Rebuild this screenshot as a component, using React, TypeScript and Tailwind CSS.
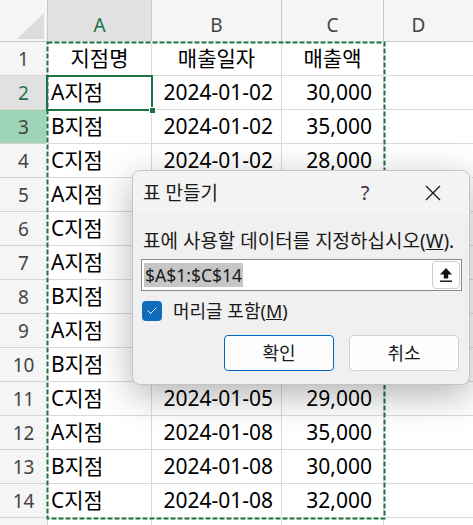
import { Check } from 'lucide-react'

// rows 5-10 of columns B and C sit under the dialog and are not visible
const rows: [string, string, string][] = [
  ['A지점', '2024-01-02', '30,000'],
  ['B지점', '2024-01-02', '35,000'],
  ['C지점', '2024-01-02', '28,000'],
  ['A지점', '', ''],
  ['C지점', '', ''],
  ['A지점', '', ''],
  ['B지점', '', ''],
  ['A지점', '', ''],
  ['B지점', '', ''],
  ['C지점', '2024-01-05', '29,000'],
  ['A지점', '2024-01-08', '35,000'],
  ['B지점', '2024-01-08', '30,000'],
  ['C지점', '2024-01-08', '32,000'],
]

const font = { fontFamily: '"Noto Sans", "Noto Sans CJK KR", sans-serif' }

function RowHeader({ n }: { n: number }) {
  // 2 = active row, 3 = highlighted row
  const bg = n === 2 ? 'bg-[#e1e1e1] text-[#1e7145]' : n === 3 ? 'bg-[#9fd5b7] text-[#444]' : 'bg-[#f5f5f5] text-[#444]'
  return (
    <div className={`flex items-center justify-center pt-[2px] border-r border-b border-[#d4d4d4] text-[19px] ${bg}`}>
      {n}
    </div>
  )
}

export default function App() {
  return (
    <div className="relative w-[473px] h-[525px] overflow-hidden bg-white text-black" style={font}>
      {/* Column headers */}
      <div className="grid grid-cols-[48px_104px_130px_102px_1fr] h-[42px] bg-[#f5f5f5] text-[19px] text-[#444]">
        <div className="relative border-r border-b border-[#c8c8c8]">
          <svg className="absolute left-[17px] top-[13px]" width="27" height="26" viewBox="0 0 27 26">
            <polygon points="27,0 27,26 0,26" fill="#dcdcdc" />
          </svg>
        </div>
        <div className="flex items-center justify-center pt-[10px] bg-[#e1e1e1] text-[#1e7145] border-r border-b border-[#c8c8c8]">A</div>
        <div className="flex items-center justify-center pt-[10px] border-r border-b border-[#c8c8c8]">B</div>
        <div className="flex items-center justify-center pt-[10px] border-r border-b border-[#c8c8c8]">C</div>
        <div className="flex items-center justify-center pt-[10px] pr-[20px] border-b border-[#c8c8c8]">D</div>
      </div>

      {/* Header row */}
      <div className="grid grid-cols-[48px_104px_130px_102px_1fr] h-[34px] text-[21px]">
        <RowHeader n={1} />
        <div className="flex items-center justify-center border-r border-b border-[#dadada]">지점명</div>
        <div className="flex items-center justify-center border-r border-b border-[#dadada]">매출일자</div>
        <div className="flex items-center justify-center border-r border-b border-[#dadada]">매출액</div>
        <div className="border-b border-[#dadada]" />
      </div>

      {rows.map((r, i) => (
        <div key={i} className="grid grid-cols-[48px_104px_130px_102px_1fr] h-[34px] text-[21px]">
          <RowHeader n={i + 2} />
          <div className="flex items-center pl-[3px] border-r border-b border-[#dadada]">{r[0]}</div>
          <div className="flex items-center justify-end pr-[8px] border-r border-b border-[#dadada]">{r[1]}</div>
          <div className="flex items-center justify-end pr-[11px] border-r border-b border-[#dadada]">{r[2]}</div>
          <div className="border-b border-[#dadada]" />
        </div>
      ))}
      <div className="grid grid-cols-[48px_104px_130px_102px_1fr] h-[34px]">
        <div className="bg-[#f5f5f5] border-r border-[#d4d4d4]" />
        <div className="border-r border-[#dadada]" />
        <div className="border-r border-[#dadada]" />
        <div className="border-r border-[#dadada]" />
        <div />
      </div>

      {/* Copy range marching ants */}
      <svg className="absolute left-[46px] top-[41px]" width="340" height="479">
        <rect x="1.5" y="1.5" width="337" height="476" fill="none" stroke="#ffffff" strokeWidth="2" />
        <rect x="1.5" y="1.5" width="337" height="476" fill="none" stroke="#1e7145" strokeWidth="2" strokeDasharray="5 2" />
      </svg>

      {/* Active cell A2 */}
      <div className="absolute left-[46px] top-[75px] w-[107px] h-[36px] border-2 border-[#1e7145]" />
      <div className="absolute left-[149px] top-[107px] w-[7px] h-[7px] bg-[#1e7145] border border-white" />

      {/* Dialog */}
      <div className="absolute left-[132px] top-[170px] w-[338px] h-[215px] rounded-[8px] border border-[#c4c4c4] bg-[#f0f0f0] shadow-[0_10px_36px_rgba(0,0,0,0.3)] overflow-hidden">
        <div className="flex items-center h-[43px] bg-[#f3f3f3] pl-[10px] text-[19px] text-[#1a1a1a]">
          <span className="flex-1 leading-[24px]">표 만들기</span>
          <span className="w-[20px] text-center text-[20px] leading-[24px] text-[#333] mr-[50px]">?</span>
          <svg className="mr-[28px]" width="16" height="16" viewBox="0 0 16 16">
            <path d="M1 1L15 15M15 1L1 15" stroke="#1a1a1a" strokeWidth="1.3" />
          </svg>
        </div>
        <div className="px-[8px] pt-[14px] text-[18px] text-[#1a1a1a]">
          <div className="pl-[2px] text-[19px] leading-[26px] whitespace-nowrap">
            표에 사용할 데이터를 지정하십시오(<span className="underline">W</span>).
          </div>
          <div className="mt-[5px] flex items-center h-[32px] w-[321px] border border-[#8a8a8a] bg-white pl-[2px] pr-[1px]">
            <span className="flex-1 leading-[24px]">
              <span className="bg-[#c6c6c6] px-[1px] text-[17.5px] leading-[24px] inline-block">$A$1:$C$14</span>
            </span>
            <div className="flex items-center justify-center w-[28px] h-[28px] rounded-[4px] border border-[#d0d0d0] bg-white">
              <svg width="14" height="16" viewBox="0 0 14 16">
                <path d="M7 1L13 7.5H9.2V11.5H4.8V7.5H1Z" fill="#111" />
                <rect x="1" y="13.5" width="12" height="1.4" fill="#111" />
              </svg>
            </div>
          </div>
          <div className="mt-[9px] flex items-center h-[22px]">
            <div className="ml-[1px] flex items-center justify-center w-[20px] h-[20px] rounded-[4px] bg-[#0f6cbd]">
              <Check className="w-[12px] h-[12px] text-white" strokeWidth={2} />
            </div>
            <span className="ml-[11px] leading-[22px]">
              머리글 포함(<span className="underline">M</span>)
            </span>
          </div>
          <div className="mt-[13px] flex justify-end gap-[15px] pr-[2px]">
            <button className="w-[110px] h-[36px] rounded-[4px] border border-[#0067c0] bg-[#fdfdfd] text-[18px] text-[#1a1a1a]">확인</button>
            <button className="w-[110px] h-[36px] rounded-[4px] border border-[#d0d0d0] bg-[#fdfdfd] text-[18px] text-[#1a1a1a]">취소</button>
          </div>
        </div>
      </div>
    </div>
  )
}
